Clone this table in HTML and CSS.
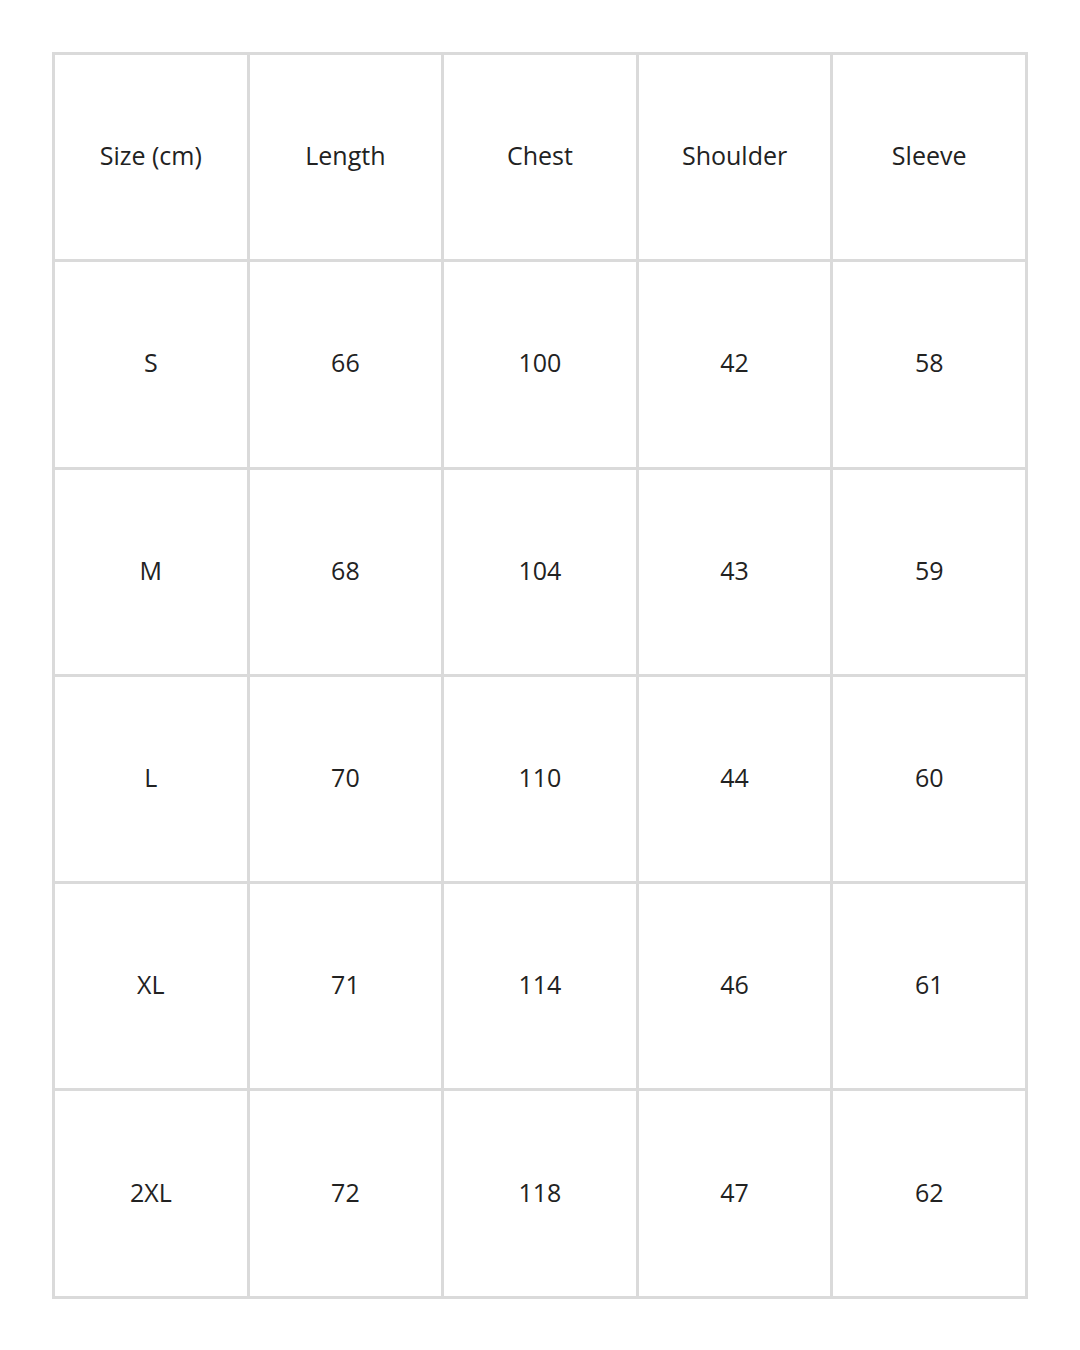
FILE: index.html
```html
<!DOCTYPE html>
<html>
<head>
<meta charset="utf-8">
<link rel="stylesheet" href="styles.css">
</head>
<body>
<div class="chart">
  <div class="cell">Size (cm)</div><div class="cell">Length</div><div class="cell">Chest</div><div class="cell">Shoulder</div><div class="cell">Sleeve</div>
  <div class="cell">S</div><div class="cell">66</div><div class="cell">100</div><div class="cell">42</div><div class="cell">58</div>
  <div class="cell">M</div><div class="cell">68</div><div class="cell">104</div><div class="cell">43</div><div class="cell">59</div>
  <div class="cell">L</div><div class="cell">70</div><div class="cell">110</div><div class="cell">44</div><div class="cell">60</div>
  <div class="cell">XL</div><div class="cell">71</div><div class="cell">114</div><div class="cell">46</div><div class="cell">61</div>
  <div class="cell">2XL</div><div class="cell">72</div><div class="cell">118</div><div class="cell">47</div><div class="cell">62</div>
</div>
</body>
</html>
```
FILE: styles.css
```css
html, body {
  margin: 0;
  padding: 0;
  background: #ffffff;
}
body {
  padding: 52px 0 0 52px;
  font-family: "Open Sans", "Liberation Sans", sans-serif;
}
.chart {
  display: grid;
  grid-template-columns: repeat(5, 191.6px);
  grid-template-rows: repeat(6, 204.3px);
  gap: 3px;
  padding: 3px;
  width: max-content;
  background: #dadada;
}
.cell {
  background: #ffffff;
  display: flex;
  align-items: center;
  justify-content: center;
  padding-bottom: 4px;
  font-size: 25px;
  color: #222222;
}
```
